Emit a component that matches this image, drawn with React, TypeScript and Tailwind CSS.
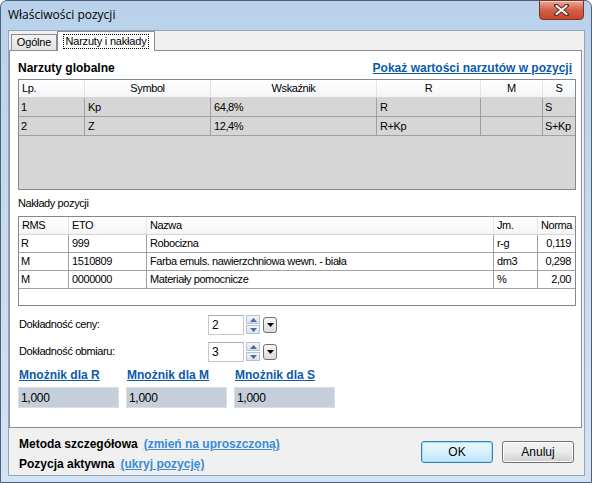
import React from 'react';

const font = "font-['Liberation_Sans',Arial,sans-serif]";

const narzuty = [
  { lp: '1', symbol: 'Kp', wsk: '64,8%', r: 'R', m: '', s: 'S' },
  { lp: '2', symbol: 'Z', wsk: '12,4%', r: 'R+Kp', m: '', s: 'S+Kp' },
];

const naklady = [
  { rms: 'R', eto: '999', nazwa: 'Robocizna', jm: 'r-g', norma: '0,119' },
  { rms: 'M', eto: '1510809', nazwa: 'Farba emuls. nawierzchniowa wewn. - biała', jm: 'dm3', norma: '0,298' },
  { rms: 'M', eto: '0000000', nazwa: 'Materiały pomocnicze', jm: '%', norma: '2,00' },
];

const cols1 = 'grid grid-cols-[65px_126px_166px_104px_62px_1fr]';
const cols2 = 'grid grid-cols-[49px_78px_347px_44px_1fr]';

const Spinner = ({ value }: { value: string }) => (
  <div className="flex items-center">
    <div className="w-[36px] h-[20px] bg-white border border-[#c5c9cf] border-t-[#abadb3] flex items-center pl-[3px] text-[12px] text-black">
      {value}
    </div>
    <div className="ml-[2px] flex flex-col gap-px">
      <div className="w-[14px] h-[9px] bg-gradient-to-b from-[#f2f6fa] to-[#d8e2ec] border border-[#b4c2d1] flex items-center justify-center">
        <svg width="7" height="4" viewBox="0 0 7 4"><path d="M0 4 L3.5 0 L7 4 Z" fill="#4c6d95" /></svg>
      </div>
      <div className="w-[14px] h-[9px] bg-gradient-to-b from-[#f2f6fa] to-[#d8e2ec] border border-[#b4c2d1] flex items-center justify-center">
        <svg width="7" height="4" viewBox="0 0 7 4"><path d="M0 0 L3.5 4 L7 0 Z" fill="#4c6d95" /></svg>
      </div>
    </div>
    <div className="ml-[3px] w-[14px] h-[16px] rounded-[3px] border border-[#707070] bg-gradient-to-b from-[#f6f6f6] to-[#dcdcdc] flex items-center justify-center">
      <svg width="7" height="4" viewBox="0 0 7 4"><path d="M0 0 L3.5 4 L7 0 Z" fill="#000" /></svg>
    </div>
  </div>
);

export default function App() {
  return (
    <div className={`${font} w-[592px] h-[483px] overflow-hidden bg-white`}>
      <div className="relative w-[592px] h-[483px] rounded-t-[7px] border border-[#4d6179] bg-gradient-to-b from-[#b9d1ea] via-[#c8dbef] to-[#d3e3f4] flex flex-col">
        {/* title bar */}
        <div className="h-[29px] flex items-center pl-[7px] pb-[1px]">
          <span className="font-['Open_Sans',sans-serif] text-[12px] text-black">Właściwości pozycji</span>
        </div>
        <div className="absolute right-[7px] top-[-1px] w-[45px] h-[20px] rounded-b-[4px] border border-[#7a3328] bg-gradient-to-b from-[#e9a99b] via-[#d2604a] to-[#c8452e] flex items-center justify-center shadow-[inset_0_1px_0_rgba(255,255,255,0.5)]">
          <svg width="15" height="12" viewBox="0 0 15 12">
            <path d="M2 1.5 L13 10.5 M13 1.5 L2 10.5" stroke="#5a2a22" strokeWidth="4" strokeLinecap="round" />
            <path d="M2.5 2 L12.5 10 M12.5 2 L2.5 10" stroke="#fff" strokeWidth="2.2" strokeLinecap="round" />
          </svg>
        </div>

        {/* client area */}
        <div className="ml-[7px] w-[577px] h-[446px] bg-[#f0f0f0] border border-[#91a5bd] flex flex-col">
          {/* tabs */}
          <div className="relative h-[19px] flex items-end pl-[1px] text-[11px] tracking-[-0.2px] whitespace-nowrap">
            <div className="ml-px w-[46px] h-[16px] border border-b-0 border-[#898c95] bg-gradient-to-b from-[#f3f3f3] to-[#e3e3e3] flex items-center justify-center text-black">
              Ogólne
            </div>
            <div className="relative z-10 -mb-px w-[98px] h-[20px] border border-b-0 border-[#898c95] bg-white flex items-center justify-center text-black">
              <span className="outline outline-1 outline-dotted outline-black px-[2px] leading-[13px]">Narzuty i nakłady</span>
            </div>
          </div>

          {/* panel */}
          <div className="w-[573px] h-[378px] bg-white border border-[#898c95] pl-[8px] pr-[4px] text-[11px] tracking-[-0.4px] text-black">
            <div className="h-[28px] flex items-center justify-between pr-[5px] pt-[6px] tracking-normal">
              <span className="font-bold text-[12px]">Narzuty globalne</span>
              <span className="font-bold text-[12px] text-[#0b5aab] underline">Pokaż wartości narzutów w pozycji</span>
            </div>

            {/* table narzuty */}
            <div className="w-[558px] h-[111px] border border-[#828790] bg-[#d6d6d6]">
              <div className={`${cols1} h-[18px] bg-gradient-to-b from-white to-[#f4f5f7] border-b border-[#d5d5d5]`}>
                <div className="pl-[3px] flex items-center">Lp.</div>
                <div className="border-l border-[#e3e5e7] flex items-center justify-center">Symbol</div>
                <div className="border-l border-[#e3e5e7] flex items-center justify-center">Wskaźnik</div>
                <div className="border-l border-[#e3e5e7] flex items-center justify-center">R</div>
                <div className="border-l border-[#e3e5e7] flex items-center justify-center">M</div>
                <div className="border-l border-[#e3e5e7] flex items-center justify-center">S</div>
              </div>
              {narzuty.map((row) => (
                <div key={row.lp} className={`${cols1} h-[19px] border-b border-[#a0a0a0]`}>
                  <div className="pl-[2px] flex items-center">{row.lp}</div>
                  <div className="pl-[3px] border-l border-[#a0a0a0] flex items-center">{row.symbol}</div>
                  <div className="pl-[3px] border-l border-[#a0a0a0] flex items-center">{row.wsk}</div>
                  <div className="pl-[3px] border-l border-[#a0a0a0] flex items-center">{row.r}</div>
                  <div className="pl-[3px] border-l border-[#a0a0a0] flex items-center">{row.m}</div>
                  <div className="pl-[2px] border-l border-[#a0a0a0] flex items-center">{row.s}</div>
                </div>
              ))}
            </div>

            <div className="h-[26px] flex items-center pt-[1px]">Nakłady pozycji</div>

            {/* table naklady */}
            <div className="w-[558px] h-[90px] border border-[#828790] bg-white">
              <div className={`${cols2} h-[18px] bg-gradient-to-b from-white to-[#f4f5f7] border-b border-[#d5d5d5]`}>
                <div className="pl-[3px] flex items-center">RMS</div>
                <div className="pl-[3px] border-l border-[#e3e5e7] flex items-center">ETO</div>
                <div className="pl-[3px] border-l border-[#e3e5e7] flex items-center">Nazwa</div>
                <div className="pl-[3px] border-l border-[#e3e5e7] flex items-center">Jm.</div>
                <div className="pl-[3px] border-l border-[#e3e5e7] flex items-center">Norma</div>
              </div>
              {naklady.map((row) => (
                <div key={row.eto} className={`${cols2} h-[18px] border-b border-[#a0a0a0]`}>
                  <div className="pl-[2px] flex items-center">{row.rms}</div>
                  <div className="pl-[3px] border-l border-[#a0a0a0] flex items-center">{row.eto}</div>
                  <div className="pl-[3px] border-l border-[#a0a0a0] flex items-center">{row.nazwa}</div>
                  <div className="pl-[3px] border-l border-[#a0a0a0] flex items-center">{row.jm}</div>
                  <div className="pr-[4px] border-l border-[#a0a0a0] flex items-center justify-end">{row.norma}</div>
                </div>
              ))}
            </div>

            {/* accuracy */}
            <div className="mt-[8px] h-[21px] flex items-center">
              <span className="w-[190px] pl-[1px]">Dokładność ceny:</span>
              <Spinner value="2" />
            </div>
            <div className="mt-[6px] h-[21px] flex items-center">
              <span className="w-[190px] pl-[1px]">Dokładność obmiaru:</span>
              <Spinner value="3" />
            </div>

            {/* multipliers */}
            <div className="mt-[5px] flex gap-[7px] tracking-normal">
              {['R', 'M', 'S'].map((k) => (
                <div key={k} className="w-[101px] flex flex-col">
                  <span className="h-[16px] font-bold text-[12px] text-[#0b5aab] underline leading-[16px] pl-px">Mnożnik dla {k}</span>
                  <div className="mt-[4px] h-[21px] bg-[#c5cfd9] border border-[#dadde2] flex items-center pl-[2px] text-[12px] tracking-[-0.3px]">1,000</div>
                </div>
              ))}
            </div>
          </div>

          {/* bottom */}
          <div className="flex-1 flex items-start justify-between pl-[10px] pr-[10px] pt-[6px]">
            <div className="flex flex-col text-[12px] text-black font-bold">
              <div className="h-[20px] flex items-center gap-[6px]">
                <span>Metoda szczegółowa</span>
                <span className="text-[#3b8bd6] underline">(zmień na uproszczoną)</span>
              </div>
              <div className="h-[20px] flex items-center gap-[6px]">
                <span>Pozycja aktywna</span>
                <span className="text-[#3b8bd6] underline">(ukryj pozycję)</span>
              </div>
            </div>
            <div className="flex gap-[9px] pt-[7px]">
              <div className="w-[72px] h-[22px] rounded-[3px] border border-[#3c7fb1] bg-gradient-to-b from-[#eaf6fd] via-[#d9f0fc] to-[#bee6fd] shadow-[inset_0_0_0_1px_#9ce0fe] flex items-center justify-center text-[12px] text-black">
                OK
              </div>
              <div className="w-[72px] h-[22px] rounded-[3px] border border-[#707070] bg-gradient-to-b from-[#f2f2f2] via-[#ebebeb] to-[#cfcfcf] shadow-[inset_0_0_0_1px_#fcfcfc] flex items-center justify-center text-[12px] text-black">
                Anuluj
              </div>
            </div>
          </div>
        </div>
      </div>
    </div>
  );
}
